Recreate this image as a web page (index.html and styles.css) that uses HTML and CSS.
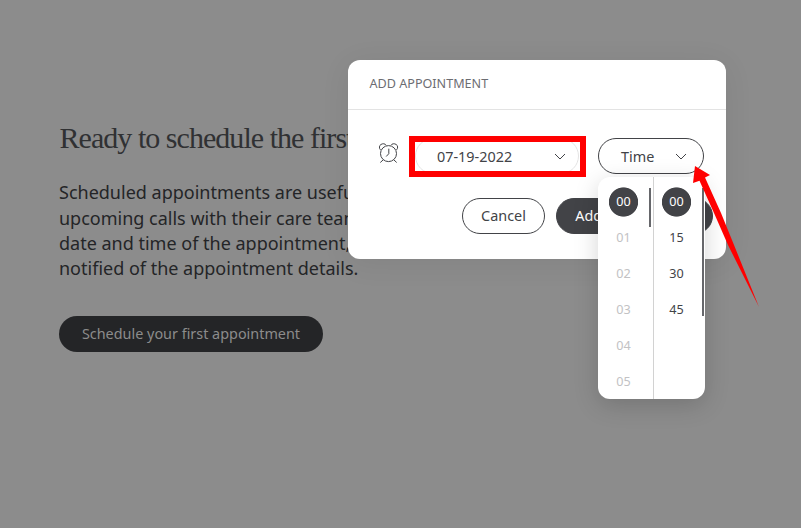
FILE: index.html
```html
<!DOCTYPE html>
<html lang="en">
<head>
<meta charset="utf-8">
<title>Add appointment</title>
<link rel="stylesheet" href="styles.css">
</head>
<body>
<main class="page">
  <h1 class="title">Ready to schedule the first</h1>
  <p class="intro">Scheduled appointments are useful<br>upcoming calls with their care team<br>date and time of the appointment,<br>notified of the appointment details.</p>
  <button class="start">Schedule your first appointment</button>
</main>
<section class="modal">
  <header class="modal-head">ADD APPOINTMENT</header>
  <div class="fields">
    <svg class="clock" width="20" height="20" viewBox="0 0 20 20" fill="none" stroke="#424347" stroke-width="1">
      <circle cx="9.5" cy="10.6" r="8"/>
      <path d="M1.5 6.9C-.2 5.3.2 2.4 1.9 1.5 3.7.3 6.1.5 7.2 2.3M17.5 6.9c1.7-1.6 1.4-4.5-.3-5.4-1.8-1.2-4.2-1-5.3.8M4 17 1.3 19.5M15 17l2.7 2.5M9.8 5.7v5l-2.6 2.8"/>
    </svg>
    <div class="highlight">
      <div class="select date"><span>07-19-2022</span>
        <svg width="12" height="7" viewBox="0 0 12 7" fill="none" stroke="#424347"><path d="M1 1l5 5 5-5"/></svg>
      </div>
    </div>
    <div class="select time"><span>Time</span>
      <svg width="12" height="7" viewBox="0 0 12 7" fill="none" stroke="#424347"><path d="M1 1l5 5 5-5"/></svg>
    </div>
  </div>
  <div class="actions">
    <button class="cancel">Cancel</button>
    <button class="add">Add appointment</button>
  </div>
</section>
<div class="picker">
  <ul class="hours">
    <li class="selected">00</li><li>01</li><li>02</li><li>03</li><li>04</li><li>05</li>
  </ul>
  <ul class="minutes">
    <li class="selected">00</li><li>15</li><li>30</li><li>45</li>
  </ul>
</div>
<svg class="arrow" width="67" height="142" viewBox="0 0 67 142" fill="#f00"><path d="M2 0 0 17 6.5 14.7 21 47 35 79 66 141 41 79 28 47 12 11.5 17 9Z"/></svg>
</body>
</html>
```
FILE: styles.css
```css
* { box-sizing: border-box; }
body {
  margin: 0;
  width: 801px;
  height: 528px;
  overflow: hidden;
  position: relative;
  background: #8c8c8c;
  font-family: "Noto Sans", sans-serif;
  color: #242527;
}
button { font: inherit; white-space: nowrap; }
.page { padding: 120px 0 0 59px; }
.title {
  margin: 0;
  padding-left: 0.5px;
  font: 400 30px/36px "Liberation Serif", serif;
  letter-spacing: -0.96px;
  color: #303133;
  white-space: nowrap;
}
.intro {
  margin: 24.4px 0 0;
  font-size: 18px;
  line-height: 25.3px;
  white-space: nowrap;
}
.start {
  display: block;
  width: 264px;
  height: 36px;
  margin-top: 34.4px;
  padding: 0;
  border: 0;
  border-radius: 18px;
  background: #242527;
  color: #8c8c8c;
  font-size: 14.4px;
}
.modal {
  position: absolute;
  left: 348px;
  top: 60px;
  width: 378px;
  height: 199px;
  overflow: hidden;
  border-radius: 12px;
  background: #fff;
  color: #424347;
  box-shadow: 0 4px 30px rgba(0, 0, 0, .07);
}
.modal-head {
  height: 50px;
  padding: 0 21.5px;
  border-bottom: 1px solid #e3e3e3;
  font-size: 12.6px;
  line-height: 48px;
  color: #6c6d72;
}
.fields {
  display: flex;
  align-items: flex-start;
  padding: 26px 22px 0 31px;
}
.clock { flex: none; margin: 7px 10px 0 0; }
.highlight {
  width: 177px;
  height: 41px;
  border: 6px solid #f00;
  overflow: hidden;
}
.select {
  display: flex;
  align-items: center;
  justify-content: space-between;
  height: 36px;
  border: 1px solid #424347;
  border-radius: 18px;
  font-size: 14.4px;
}
.date {
  width: 164px;
  margin-top: -4px;
  padding: 0 12px 0 21px;
  border-color: #e3e3e3;
}
.time {
  width: 106px;
  margin: 2px 0 0 12px;
  padding: 1px 16px 0 22px;
}
.actions {
  display: flex;
  gap: 11px;
  padding: 21px 0 0 114px;
}
.cancel, .add {
  height: 36px;
  padding: 0 18px 1px;
  border: 1px solid #424347;
  border-radius: 18px;
  background: #fff;
  color: #424347;
  font-size: 14.4px;
}
.cancel { width: 83px; }
.add { width: 157px; background: #424347; color: #fff; }
.picker {
  position: absolute;
  left: 598px;
  top: 177px;
  width: 107px;
  height: 222px;
  display: flex;
  overflow: hidden;
  border-radius: 12px;
  background: #fff;
  box-shadow: 0 6px 24px rgba(0, 0, 0, .17);
}
.picker ul {
  position: relative;
  margin: 0;
  padding: 7px 0 0;
  list-style: none;
  font-size: 12.6px;
  line-height: 18px;
}
.picker li {
  display: flex;
  align-items: center;
  justify-content: center;
  height: 36px;
  padding-bottom: 1px;
}
.picker .selected {
  background: radial-gradient(circle 15px at 50% 50%, #424347 14.2px, transparent 15px);
  color: #fff;
}
.hours {
  width: 56px;
  border-right: 1px solid #d2d2d2;
  color: #c2c2c4;
}
.hours li { margin-right: 4px; }
.minutes { width: 51px; color: #424347; }
.minutes li { margin-right: 6px; }
.hours::after, .minutes::after {
  content: "";
  position: absolute;
  top: 11px;
  width: 2px;
  background: #66676b;
}
.hours::after { right: 2px; height: 39px; }
.minutes::after { right: 1px; top: 11px; height: 128px; }
.arrow { position: absolute; left: 693px; top: 166px; }
```
